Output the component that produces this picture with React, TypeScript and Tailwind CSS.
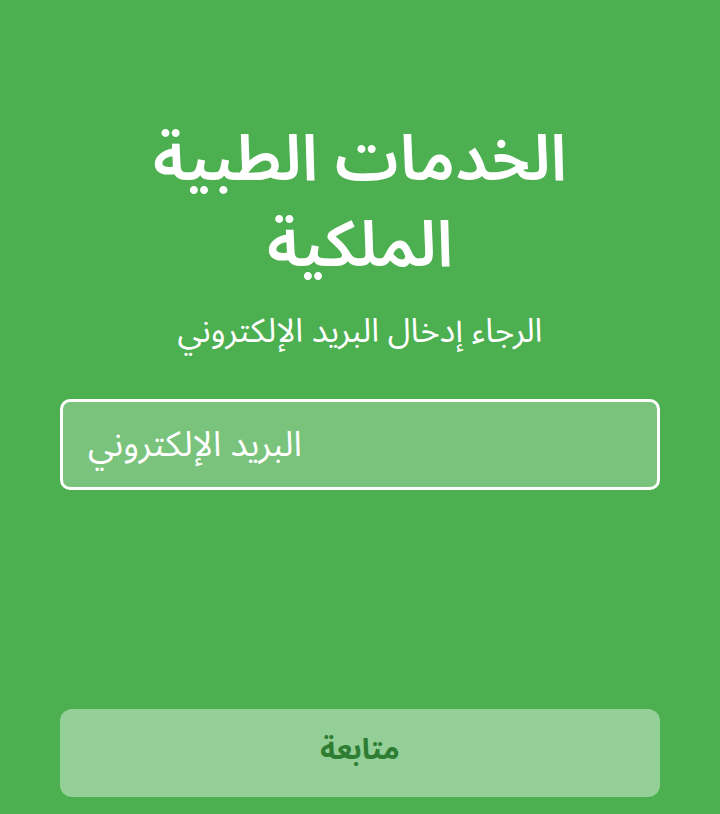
import React from "react";

export default function App() {
  return (
    <div
      dir="rtl"
      className="min-h-[814px] w-full bg-[#4CAF50] flex flex-col px-[60px] pt-[117px] pb-[17px] font-['Noto_Sans_Arabic','Noto_Sans',sans-serif]"
    >
      <h1 className="text-center text-white font-semibold text-[64px] leading-[86px]">
        الخدمات الطبية
        <br />
        الملكية
      </h1>
      <p className="mt-[23px] text-center text-white text-[33px] leading-[40px]">
        الرجاء إدخال البريد الإلكتروني
      </p>
      <input
        type="email"
        placeholder="البريد الإلكتروني"
        dir="rtl"
        className="mt-[47px] h-[91px] w-full rounded-[10px] border-[3px] border-white bg-white/25 px-[25px] text-left text-[35px] text-white placeholder:text-white outline-none"
      />
      <div className="flex-1" />
      <button className="h-[88px] w-full rounded-[12px] bg-white/40 pb-[6px] text-[29px] font-bold text-[#2E7D32]">
        متابعة
      </button>
    </div>
  );
}
